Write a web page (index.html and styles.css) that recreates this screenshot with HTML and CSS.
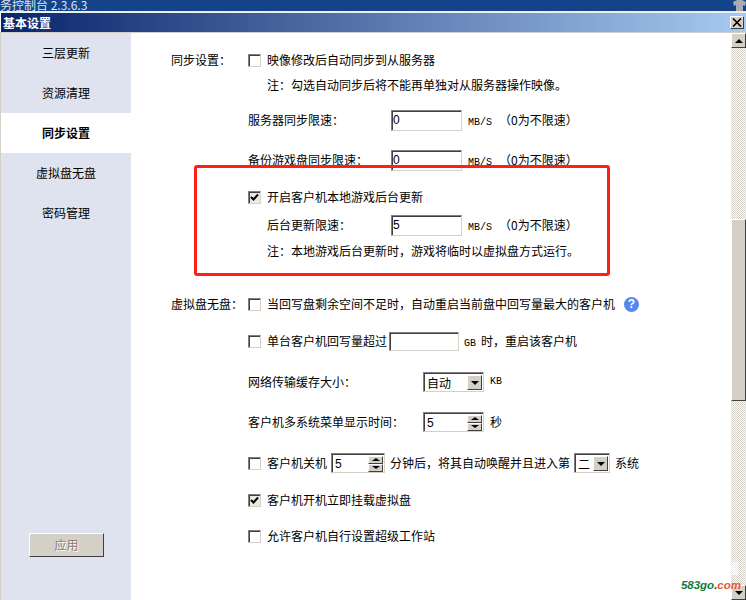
FILE: index.html
```html
<!DOCTYPE html>
<html lang="zh-CN">
<head>
    <meta charset="UTF-8">
    <title>基本设置</title>
    <link rel="stylesheet" href="styles.css">
</head>
<body>
    <div class="topbar">
        <span class="app-title">务控制台 2.3.6.3</span>
        <svg class="skin-icon" width="13" height="11" viewBox="0 0 13 11"><path d="M4 0h5l4 2-1 4-2-1v6H3V5L1 6 0 2z" fill="#a9acb3"/></svg>
    </div>
    <div class="titlebar">
        <span class="dialog-title">基本设置</span>
        <div class="close-button">
            <svg width="10" height="9" viewBox="0 0 10 9"><path d="M1 0.5l8 8M9 0.5l-8 8" fill="none" stroke="#000" stroke-width="1.6"/></svg>
        </div>
    </div>

    <div class="window">
        <div class="sidebar">
            <div class="nav-item">三层更新</div>
            <div class="nav-item">资源清理</div>
            <div class="nav-item active">同步设置</div>
            <div class="nav-item">虚拟盘无盘</div>
            <div class="nav-item">密码管理</div>
            <div class="apply-button">应用</div>
        </div>

        <div class="main-content">
            <div class="row first">
                <span class="group-label">同步设置：</span>
                <span class="check"></span>
                <span>映像修改后自动同步到从服务器</span>
            </div>
            <div class="row gap-5">
                <span class="note">注：勾选自动同步后将不能再单独对从服务器操作映像。</span>
            </div>
            <div class="row gap-15">
                <span class="field-label">服务器同步限速：</span>
                <input class="text-input" value="0">
                <span class="unit"><span class="mono">MB/S</span><span class="hint">（0为不限速）</span></span>
            </div>
            <div class="row gap-20">
                <span class="field-label">备份游戏盘同步限速：</span>
                <input class="text-input" value="0">
                <span class="unit"><span class="mono">MB/S</span><span class="hint">（0为不限速）</span></span>
            </div>
            <div class="row gap-17">
                <span class="check checked"><svg width="9" height="9" viewBox="0 0 9 9"><path d="M1 4l2.5 2.5L8 1.5" fill="none" stroke="#000" stroke-width="2"/></svg></span>
                <span>开启客户机本地游戏后台更新</span>
            </div>
            <div class="row gap-8">
                <span class="field-label indented">后台更新限速：</span>
                <input class="text-input" value="5">
                <span class="unit"><span class="mono">MB/S</span><span class="hint">（0为不限速）</span></span>
            </div>
            <div class="row gap-6">
                <span class="note">注：本地游戏后台更新时，游戏将临时以虚拟盘方式运行。</span>
            </div>
            <div class="row gap-33">
                <span class="group-label">虚拟盘无盘：</span>
                <span class="check"></span>
                <span>当回写盘剩余空间不足时，自动重启当前盘中回写量最大的客户机</span>
                <span class="help-icon">?</span>
            </div>
            <div class="row gap-17">
                <span class="check"></span>
                <span>单台客户机回写量超过</span>
                <input class="text-input short">
                <span class="after-input"><span class="mono">GB</span><span class="gb-text">时，重启该客户机</span></span>
            </div>
            <div class="row gap-21">
                <span class="field-label wide">网络传输缓存大小：</span>
                <div class="select-box">
                    <span class="select-value">自动</span>
                    <span class="arrow-button"><i class="arrow-down"></i></span>
                </div>
                <span class="after-select mono">KB</span>
            </div>
            <div class="row gap-20">
                <span class="field-label wide">客户机多系统菜单显示时间：</span>
                <div class="spin-box">
                    <span class="select-value">5</span>
                    <span class="spin-buttons"><span><i class="arrow-up"></i></span><span><i class="arrow-down"></i></span></span>
                </div>
                <span class="after-select">秒</span>
            </div>
            <div class="row gap-21">
                <span class="check"></span>
                <span class="power-label">客户机关机</span>
                <div class="spin-box small">
                    <span class="select-value">5</span>
                    <span class="spin-buttons"><span><i class="arrow-up"></i></span><span><i class="arrow-down"></i></span></span>
                </div>
                <span class="after-spin">分钟后，将其自动唤醒并且进入第</span>
                <div class="select-box small">
                    <span class="select-value">二</span>
                    <span class="arrow-button"><i class="arrow-down"></i></span>
                </div>
                <span class="after-spin">系统</span>
            </div>
            <div class="row gap-17">
                <span class="check checked"><svg width="9" height="9" viewBox="0 0 9 9"><path d="M1 4l2.5 2.5L8 1.5" fill="none" stroke="#000" stroke-width="2"/></svg></span>
                <span>客户机开机立即挂载虚拟盘</span>
            </div>
            <div class="row gap-16">
                <span class="check"></span>
                <span>允许客户机自行设置超级工作站</span>
            </div>

            <div class="red-box"></div>
        </div>

        <div class="scrollbar">
            <div class="scroll-button"><i class="arrow-up"></i></div>
            <div class="scroll-track"><div class="scroll-thumb"></div></div>
            <div class="scroll-button"><i class="arrow-down"></i></div>
        </div>

        <div class="wm-mark"></div>
        <div class="watermark"><span class="wm-green">583go</span><span class="wm-dot">.</span><span class="wm-red">com</span></div>
    </div>
</body>
</html>
```

FILE: styles.css
```css
body {
    margin: 0;
    width: 746px;
    height: 600px;
    overflow: hidden;
    background-color: white;
    font-family: "Noto Sans CJK SC", sans-serif;
    font-size: 12px;
    color: black;
    display: flex;
    flex-direction: column;
}

.topbar {
    height: 11px;
    background-color: #134388;
    border-bottom: 2px solid #eeeeee;
    display: flex;
    justify-content: space-between;
    overflow: hidden;
    flex-shrink: 0;
}

.app-title {
    color: #dce6f4;
    line-height: 9px;
    white-space: pre;
}

.titlebar {
    height: 19px;
    margin-left: 1px;
    padding-right: 2px;
    background: linear-gradient(to right, #0a246a, #a6caf0);
    display: flex;
    align-items: center;
    justify-content: space-between;
    flex-shrink: 0;
}

.dialog-title {
    color: white;
    font-weight: bold;
    padding-left: 2px;
}

.close-button {
    width: 14px;
    height: 13px;
    background-color: #d4d0c8;
    border: 1px solid;
    border-color: white #404040 #404040 white;
    box-sizing: border-box;
    display: flex;
    align-items: center;
    justify-content: center;
}

.window {
    height: 567px;
    display: flex;
    position: relative;
    border-top: 1px solid #d4d0c8;
    border-left: 1px solid #d4d0c8;
    border-bottom: 2px solid #8c8a85;
    flex-shrink: 0;
}

.sidebar {
    width: 130px;
    background-color: #dfe3ef;
    display: flex;
    flex-direction: column;
    flex-shrink: 0;
}

.nav-item {
    height: 40px;
    line-height: 40px;
    text-align: center;
}

.nav-item.active {
    background-color: white;
    font-weight: bold;
}

.apply-button {
    width: 75px;
    height: 24px;
    line-height: 22px;
    margin: auto 0 43px 28px;
    box-sizing: border-box;
    text-align: center;
    color: #808080;
    text-shadow: 1px 1px 0 white;
    background-color: #d4d0c8;
    border: 1px solid;
    border-color: white #404040 #404040 white;
}

.main-content {
    flex-grow: 1;
    padding-left: 40px;
    position: relative;
}

.row {
    height: 20px;
    display: flex;
    align-items: center;
    white-space: nowrap;
    padding-left: 77px;
    position: relative;
}

/* o texto fica 1px acima do centro da linha, como na tela original */
.row > span {
    padding-bottom: 2px;
}

.first { margin-top: 17px; }
.gap-5 { margin-top: 5px; }
.gap-6 { margin-top: 6px; }
.gap-8 { margin-top: 8px; }
.gap-15 { margin-top: 15px; }
.gap-16 { margin-top: 16px; }
.gap-17 { margin-top: 17px; }
.gap-20 { margin-top: 20px; }
.gap-21 { margin-top: 21px; }
.gap-33 { margin-top: 33px; }

.group-label {
    position: absolute;
    left: 0;
}

.note {
    margin-left: 19px;
}

.row > .check {
    width: 13px;
    height: 13px;
    margin-right: 6px;
    padding: 0;
    box-sizing: border-box;
    background-color: white;
    border: 1px solid;
    border-color: #808080 #d4d0c8 #d4d0c8 #808080;
    box-shadow: inset 1px 1px 0 #404040;
    display: flex;
    align-items: center;
    justify-content: center;
    flex-shrink: 0;
}

.row > .checked {
    background-color: #ece9e2;
}

.field-label {
    width: 143px;
}

.field-label.indented {
    width: 124px;
    margin-left: 19px;
}

.field-label.wide {
    width: 175px;
}

.text-input {
    width: 71px;
    height: 21px;
    box-sizing: border-box;
    padding: 0 1px;
    font-family: "Liberation Sans", sans-serif;
    font-size: 12px;
    background-color: white;
    border: 1px solid;
    border-color: #808080 #d4d0c8 #d4d0c8 #808080;
    box-shadow: inset 1px 1px 0 #404040;
    outline: none;
    flex-shrink: 0;
}

.text-input.short {
    width: 70px;
    height: 19px;
    margin-left: 2px;
}

.mono {
    font-family: "Liberation Mono", monospace;
    font-size: 10px;
}

.unit {
    margin-left: 6px;
}

.hint {
    margin-left: 7px;
}

.after-input {
    margin-left: 5px;
}

.gb-text {
    margin-left: 5px;
}

.after-select {
    margin-left: 6px;
}

.after-spin {
    margin-left: 5px;
}

.power-label {
    margin-right: 4px;
}

.select-box,
.spin-box {
    width: 61px;
    height: 20px;
    box-sizing: border-box;
    background-color: white;
    border: 1px solid;
    border-color: #808080 #d4d0c8 #d4d0c8 #808080;
    box-shadow: inset 1px 1px 0 #404040;
    display: flex;
    align-items: center;
    justify-content: space-between;
    padding: 2px 1px 1px 3px;
    flex-shrink: 0;
}

.spin-box.small {
    width: 54px;
}

.select-box.small {
    width: 36px;
    margin-left: 4px;
}

.select-value {
    font-size: 12px;
}

.spin-box .select-value {
    font-family: "Liberation Sans", sans-serif;
}

.arrow-button {
    width: 15px;
    height: 15px;
    box-sizing: border-box;
    background-color: #d4d0c8;
    border: 1px solid;
    border-color: white #404040 #404040 white;
    display: flex;
    align-items: center;
    justify-content: center;
}

.spin-buttons {
    width: 15px;
    height: 16px;
    display: flex;
    flex-direction: column;
}

.spin-buttons span {
    flex: 1;
    background-color: #d4d0c8;
    border: 1px solid;
    border-color: white #404040 #404040 white;
    display: flex;
    align-items: center;
    justify-content: center;
}

.arrow-up,
.arrow-down {
    display: block;
    width: 0;
    height: 0;
    border-left: 4px solid transparent;
    border-right: 4px solid transparent;
}

.arrow-up {
    border-bottom: 4px solid black;
}

.arrow-down {
    border-top: 4px solid black;
}

.spin-buttons .arrow-up {
    border-bottom-width: 3px;
}

.spin-buttons .arrow-down {
    border-top-width: 3px;
}

.row > .help-icon {
    width: 15px;
    height: 15px;
    margin-left: 9px;
    padding: 0;
    border-radius: 50%;
    background-color: #5588ee;
    color: white;
    font-family: "Liberation Sans", sans-serif;
    font-size: 12px;
    font-weight: bold;
    line-height: 15px;
    text-align: center;
}

.red-box {
    position: absolute;
    left: 63px;
    top: 132px;
    width: 410px;
    height: 105px;
    border: 3px solid #ff2015;
    border-radius: 3px;
}

.scrollbar {
    width: 15px;
    display: flex;
    flex-direction: column;
    flex-shrink: 0;
}

.scroll-button {
    height: 15px;
    box-sizing: border-box;
    background-color: #d4d0c8;
    border: 1px solid;
    border-color: white #404040 #404040 white;
    display: flex;
    align-items: center;
    justify-content: center;
    flex-shrink: 0;
}

.scroll-track {
    flex-grow: 1;
    background-color: white;
    background-image: repeating-conic-gradient(#d4d0c8 0 25%, white 0 50%);
    background-size: 2px 2px;
}

.scroll-thumb {
    height: 182px;
    margin-top: 171px;
    box-sizing: border-box;
    background-color: #d4d0c8;
    border: 1px solid;
    border-color: white #404040 #404040 white;
}

.wm-mark {
    position: absolute;
    right: 7px;
    bottom: 25px;
    width: 9px;
    height: 13px;
    background-color: rgba(255, 255, 255, 0.6);
}

.watermark {
    position: absolute;
    right: 5px;
    bottom: 8px;
    font-family: "Liberation Sans", sans-serif;
    font-size: 11.5px;
    font-weight: bold;
    font-style: italic;
    line-height: 14px;
}

.wm-green { color: #0f7a3c; }
.wm-dot { color: #333333; }
.wm-red { color: #ee5533; }
```
